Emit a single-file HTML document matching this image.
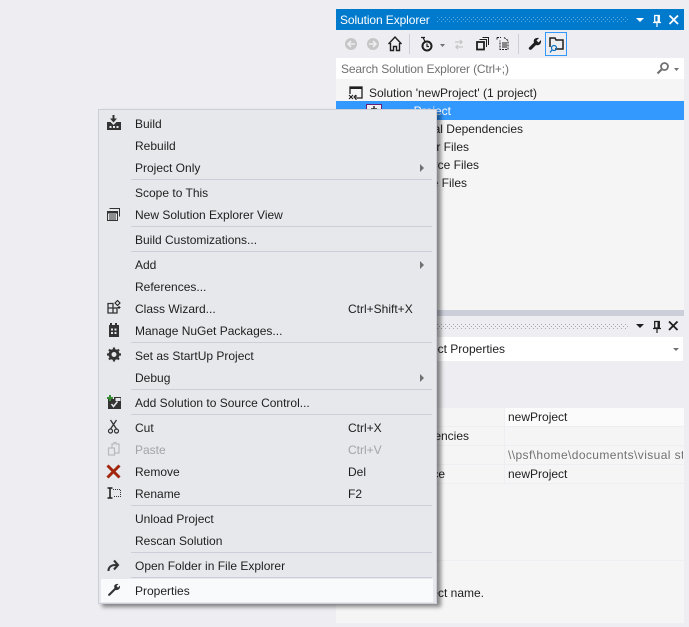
<!DOCTYPE html>
<html><head><meta charset="utf-8"><style>
html,body{margin:0;padding:0;width:689px;height:627px;overflow:hidden;background:#eeeef2}
body{position:relative;font-family:"Liberation Sans",sans-serif;font-size:12px;color:#1e1e1e}
div,span.t,svg.a{position:absolute}
.t{position:absolute;white-space:nowrap;line-height:16px;height:16px}
.sep{position:absolute;left:131px;width:301px;height:1px;background:#ccced9}
.arr{position:absolute;left:420px;width:0;height:0;border-left:4px solid #717171;border-top:4px solid transparent;border-bottom:4px solid transparent}
</style></head><body>

<!-- Solution Explorer panel -->
<div style="left:336px;top:9px;width:348px;height:21px;background:#007acc"></div>
<svg class="a" style="left:437px;top:17px" width="191" height="6"><defs><pattern id="d1" width="4" height="4" patternUnits="userSpaceOnUse"><rect width="1" height="1" fill="#59a8de"/><rect x="2" y="2" width="1" height="1" fill="#59a8de"/></pattern></defs><rect width="191" height="6" fill="url(#d1)"/></svg>
<span class="t" style="left:340px;top:12px;color:#fff;letter-spacing:-.1px">Solution Explorer</span>
<svg class="a" style="left:630px;top:9px" width="54" height="21" fill="none">
<path d="M6 9h8l-4 4z" fill="#fff"/>
<path d="M24.700 6.500h4.600v6.500h-4.600z" stroke="#fff" stroke-width="1.300"/><path d="M23 13.500h8M27 13.500v4.500" stroke="#fff" stroke-width="1.200"/><rect x="27.500" y="6" width="2" height="7" fill="#fff"/>
<path d="M39.500 6.500l8.500 8.500M48 6.500l-8.500 8.500" stroke="#fff" stroke-width="1.800"/>
</svg>
<div style="left:336px;top:58px;width:348px;height:21px;background:#fff"></div>
<span class="t" style="left:341px;top:61px;color:#717171;letter-spacing:-.16px">Search Solution Explorer (Ctrl+;)</span>
<svg class="a" style="left:336px;top:30px" width="348" height="50" fill="none">
<circle cx="15" cy="14" r="6" fill="#c6c6c6"/><path d="M19 14h-7m3-3l-3 3 3 3" stroke="#eeeef2" stroke-width="1.600"/>
<circle cx="37" cy="14" r="6" fill="#c6c6c6"/><path d="M33 14h7m-3-3l3 3-3 3" stroke="#eeeef2" stroke-width="1.600"/>
<path d="M52.500 14l6.500-7 6.500 7M54.500 13v7.500h3v-4h3v4h3v-7.500" stroke="#1e1e1e" stroke-width="1.400"/>
<rect x="73" y="4" width="1" height="20" fill="#ccced9"/>
<circle cx="91" cy="16" r="4.500" stroke="#1e1e1e" stroke-width="2"/><path d="M91 13.500v3h2M85 7.500h4M87 7.500l2 4" stroke="#1e1e1e" stroke-width="1.200"/>
<path d="M104 14h5l-2.500 3z" fill="#717171"/>
<path d="M119 12h7m-2-2l2 2-2 2M127 17h-7m2-2l-2 2 2 2" stroke="#c6c6c6" stroke-width="1.300"/>
<rect x="141" y="12" width="7" height="7.500" stroke="#1e1e1e" stroke-width="1.800"/><path d="M143.500 9.500h7v7.500M146.500 7.500h6v7.500" stroke="#1e1e1e" stroke-width="1"/>
<path d="M161 7.500h4M161 7.500v3M168 7.500l4 3v9h-8v-9" stroke="#1e1e1e" stroke-dasharray="2 1"/><path d="M166 13h5M166 15h5M166 17h5" stroke="#1e1e1e"/>
<rect x="182" y="4" width="1" height="20" fill="#ccced9"/>
<path d="M193 17.500l5-5c-1-3 1-5 5-4.500l-2.500 2.500 2 2 2.500-2.500c.5 4-2 6-5 5l-4.500 4.500c-1.500 1-3.500-.500-2.500-2z" fill="#1e1e1e"/>
<rect x="209.500" y="2.500" width="21" height="23" stroke="#3399ff"/>
<path d="M214 17V8h5l1 2h7v9h-8" stroke="#1e1e1e" stroke-width="1.500"/>
<circle cx="218" cy="18" r="2.500" stroke="#0e70c0" stroke-width="1.200"/><path d="M216 20l-2 2.500" stroke="#0e70c0" stroke-width="1.300"/>
<circle cx="328.500" cy="36.500" r="3.500" stroke="#717171" stroke-width="1.800"/><path d="M325.500 39.500l-4 4" stroke="#717171" stroke-width="2.200"/>
<path d="M338 38h5l-2.500 3z" fill="#717171"/>
</svg>

<div style="left:336px;top:79px;width:348px;height:231px;background:#f5f5f5"></div>
<svg class="a" style="left:348px;top:85px" width="16" height="16" fill="none">
<path d="M2 9V2h12v11H9" stroke="#1e1e1e" stroke-width="1.300"/><path d="M2 2h12v2H2z" fill="#1e1e1e"/>
<path d="M1 10l4 4M1 14l4-4M8 10l-2 2 2 2M8 10v5" stroke="#1e1e1e" stroke-width="1.100"/>
</svg>
<span class="t" style="left:369px;top:85px">Solution 'newProject' (1 project)</span>
<div style="left:336px;top:101px;width:348px;height:19px;background:#3399ff"></div>
<svg class="a" style="left:352px;top:103px" width="32" height="14" fill="none">
<path d="M0 7h3" stroke="#fff"/>
<rect x="14.500" y="1.500" width="15" height="10" fill="#f0eff1" stroke="#68217a"/>
<path d="M19 6h6M22 3v6" stroke="#333" stroke-width="1.500"/>
</svg>
<span class="t" style="right:238px;top:103px;color:#fff">Project</span>
<span class="t" style="right:166px;top:121px">External Dependencies</span>
<span class="t" style="right:220px;top:139px">Header Files</span>
<span class="t" style="right:210px;top:157px">Source Files</span>
<span class="t" style="right:222px;top:175px">Resource Files</span>

<!-- Splitter + Properties -->
<div style="left:336px;top:310px;width:348px;height:6px;background:#ccced9"></div>
<svg class="a" style="left:437px;top:324px" width="191" height="6"><defs><pattern id="d2" width="4" height="4" patternUnits="userSpaceOnUse"><rect width="1" height="1" fill="#a9a9ad"/><rect x="2" y="2" width="1" height="1" fill="#a9a9ad"/></pattern></defs><rect width="191" height="6" fill="url(#d2)"/></svg>
<svg class="a" style="left:630px;top:316px" width="54" height="21" fill="none">
<path d="M6 8h8l-4 4z" fill="#1e1e1e"/>
<path d="M24.700 5.500h4.600v6.500h-4.600z" stroke="#1e1e1e" stroke-width="1.300"/><path d="M23 12.500h8M27 12.500v4.500" stroke="#1e1e1e" stroke-width="1.200"/><rect x="27.500" y="5" width="2" height="7" fill="#1e1e1e"/>
<path d="M39 5.500l8.500 8.500M47.500 5.500l-8.500 8.500" stroke="#1e1e1e" stroke-width="1.800"/>
</svg>
<div style="left:336px;top:337px;width:347px;height:24px;background:#fff"></div>
<span class="t" style="right:184px;top:341px">newProject Properties</span>
<svg class="a" style="left:672px;top:346px" width="8" height="6"><path d="M1 2h6l-3 3z" fill="#717171"/></svg>
<div style="left:336px;top:408px;width:348px;height:152px;background:#f5f5f5"></div>
<div style="left:505px;top:408px;width:179px;height:18px;background:#fbfbfb"></div>
<div style="left:336px;top:426px;width:348px;height:1px;background:#eeeef2"></div>
<div style="left:336px;top:445px;width:348px;height:1px;background:#eeeef2"></div>
<div style="left:336px;top:464px;width:348px;height:1px;background:#eeeef2"></div>
<div style="left:336px;top:483px;width:348px;height:1px;background:#eeeef2"></div>
<div style="left:504px;top:408px;width:1px;height:76px;background:#eeeef2"></div>
<span class="t" style="left:508px;top:409px">newProject</span>
<span class="t" style="right:220px;top:428px">External Dependencies</span>
<div style="left:505px;top:446px;width:178px;height:18px;overflow:hidden"><span class="t" style="left:3px;top:1px;color:#717171;letter-spacing:.4px">\\psf\home\documents\visual studio</span></div>
<span class="t" style="right:244px;top:466px">Namespace</span>
<span class="t" style="left:508px;top:466px">newProject</span>
<div style="left:336px;top:560px;width:348px;height:63px;background:#f5f5f5;border-top:1px solid #eeeef2;box-sizing:border-box"></div>
<span class="t" style="right:205px;top:585px">Specifies the project name.</span>

<!-- Context menu -->
<div style="left:98px;top:109px;width:339px;height:495px;box-sizing:border-box;background:#e7e8ec;border:1px solid #ccced9;box-shadow:4px 3px 4px rgba(0,0,0,.45)"></div>
<div style="left:101px;top:579px;width:332px;height:23px;background:#f9fafc"></div>

<span class="t" style="left:135px;top:116px">Build</span>
<span class="t" style="left:135px;top:138px">Rebuild</span>
<span class="t" style="left:135px;top:160px">Project Only</span>
<div class="arr" style="top:164px"></div>
<div class="sep" style="top:179px"></div>
<span class="t" style="left:135px;top:185px">Scope to This</span>
<span class="t" style="left:135px;top:207px">New Solution Explorer View</span>
<div class="sep" style="top:226px"></div>
<span class="t" style="left:135px;top:232px">Build Customizations...</span>
<div class="sep" style="top:251px"></div>
<span class="t" style="left:135px;top:257px">Add</span>
<div class="arr" style="top:261px"></div>
<span class="t" style="left:135px;top:279px">References...</span>
<span class="t" style="left:135px;top:301px">Class Wizard...</span>
<span class="t" style="left:348px;top:301px">Ctrl+Shift+X</span>
<span class="t" style="left:135px;top:323px">Manage NuGet Packages...</span>
<div class="sep" style="top:342px"></div>
<span class="t" style="left:135px;top:348px">Set as StartUp Project</span>
<span class="t" style="left:135px;top:370px">Debug</span>
<div class="arr" style="top:374px"></div>
<div class="sep" style="top:389px"></div>
<span class="t" style="left:135px;top:395px">Add Solution to Source Control...</span>
<div class="sep" style="top:414px"></div>
<span class="t" style="left:135px;top:420px">Cut</span>
<span class="t" style="left:348px;top:420px">Ctrl+X</span>
<span class="t" style="left:135px;top:442px;color:#a2a4a5">Paste</span>
<span class="t" style="left:348px;top:442px;color:#a2a4a5">Ctrl+V</span>
<span class="t" style="left:135px;top:464px">Remove</span>
<span class="t" style="left:348px;top:464px">Del</span>
<span class="t" style="left:135px;top:486px">Rename</span>
<span class="t" style="left:348px;top:486px">F2</span>
<div class="sep" style="top:505px"></div>
<span class="t" style="left:135px;top:511px">Unload Project</span>
<span class="t" style="left:135px;top:533px">Rescan Solution</span>
<div class="sep" style="top:552px"></div>
<span class="t" style="left:135px;top:558px">Open Folder in File Explorer</span>
<div class="sep" style="top:577px"></div>
<span class="t" style="left:135px;top:583px">Properties</span>

<!-- Menu icons -->
<svg class="a" style="left:106px;top:115px" width="16" height="490" fill="none" stroke="none">
<path d="M6.500 0h2v3.500h2.500L7.500 7.500 4 3.500h2.500z" fill="#333"/>
<path d="M1 7h3.500l3 3 3-3H15v8H1z" fill="#333"/><path d="M3.500 11h2v2h-2zM7 11h2v2H7zM10.500 11h2v2h-2z" fill="#e7e8ec"/>
<rect x="1.500" y="96.500" width="10" height="9" stroke="#333"/><path d="M1.500 97.500h10" stroke="#333" stroke-width="2"/><path d="M3.500 93.500h10v8" stroke="#333"/><path d="M3 100h7M3 102h7M3 104h7" stroke="#333"/>
<path d="M2 188.500h5v4.500h4v5H2zM2 193h5v5" stroke="#333" stroke-width="1.300"/><path d="M9 188l2.500-2.500L14 188l-2.500 2.500zM11.500 192.500h3M13 191v3M8 193h2" stroke="#222" stroke-width="1.100"/>
<path d="M4 208h2v2h3v-2h2v2h2v12H3v-12h1z" fill="#333"/><path d="M5 213.500h2v2H5zM8.500 213.500h2v2h-2zM5 217h2v2H5zM8.500 217h2v2h-2z" fill="#e7e8ec"/>
<circle cx="8" cy="239.500" r="4" stroke="#333" stroke-width="3"/><path d="M8 232.500v3M8 243.500v3M1 239.500h3M12 239.500h3M3 234.500l2 2M11 242.500l2 2M13 234.500l-2 2M5 242.500l-2 2" stroke="#333" stroke-width="2.200"/>
<path d="M2 284h6v-2h7v12H2z" fill="#333"/><path d="M9.500 283h5v3h-5z" fill="#e7e8ec"/><path d="M1 283h6M4 280v6" stroke="#388a34" stroke-width="2"/>
<path d="M5.500 289l2 2.500 4-5" stroke="#e7e8ec" stroke-width="1.500"/>
<path d="M4.500 305l6 9M10.500 305l-6 9" stroke="#333" stroke-width="1.300"/><circle cx="4.500" cy="316" r="2" stroke="#333" stroke-width="1.200"/><circle cx="10.500" cy="316" r="2" stroke="#333" stroke-width="1.200"/>
<path d="M6 333v-4h2v-1.500h2V329h3v9H9M2.500 333h6v7h-6z" stroke="#b9babd" stroke-width="1.200"/>
<path d="M1.500 350.500l12 12M13.500 350.500l-12 12" stroke="#a1260d" stroke-width="3"/>
<path d="M1.500 373h5M1.500 383h5M4 373v10" stroke="#222" stroke-width="1.600"/><path d="M7 374.500h7.500v7H7" stroke="#333" stroke-dasharray="1 1"/>
<path d="M2.500 456c0-4 3-6 7-6h1M8 445.500l4 4.500-4 4.500" stroke="#333" stroke-width="2.100"/>
<path d="M2.500 479l6-6c-1-2.500.5-4.500 4-4l-2 2 1.500 1.500 2-2c.5 3.500-2 5-4.500 4.500l-5.500 5.500c-1.500 1-2.500-.500-1.500-1.500z" fill="#333"/>
</svg>

</body></html>
